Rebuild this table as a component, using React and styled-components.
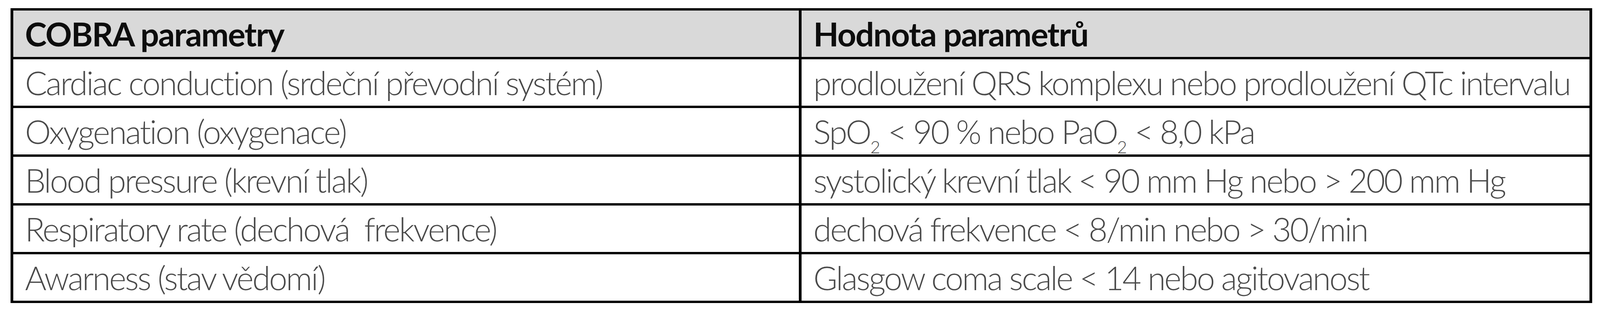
import React from "react";
import styled, { createGlobalStyle } from "styled-components";

const Global = createGlobalStyle`
  html, body {
    margin: 0;
    padding: 0;
    background: #ffffff;
  }
  body {
    font-family: "Lato", "Open Sans", "Liberation Sans", sans-serif;
  }
`;

const Page = styled.div`
  padding: 21px 20px 0 27px;
`;

const Table = styled.div`
  display: grid;
  grid-template-columns: 2660fr 2667fr;
  grid-auto-rows: 125px;
  box-sizing: border-box;
  border-top: 6px solid #000;
  border-left: 7px solid #000;
`;

const Cell = styled.div`
  box-sizing: border-box;
  min-width: 0;
  display: flex;
  align-items: center;
  padding: 0 0 0 30px;
  border-right: 7px solid #000;
  border-bottom: 6px solid #000;
  background: ${(p) => (p.$head ? "#d9d9d9" : "#ffffff")};
  color: ${(p) => (p.$head ? "#0d0d0d" : "#4a4a4a")};
  font-size: 84px;
  font-weight: ${(p) => (p.$head ? 700 : 300)};
  letter-spacing: ${(p) => (p.$head ? "-2px" : "-3.5px")};
  line-height: 1;
`;

const Label = styled.span`
  display: block;
  white-space: pre;
`;

const Sub = styled.span`
  font-size: 44px;
  vertical-align: -24px;
  line-height: 0;
  letter-spacing: 0;
`;

const rows = [
  ["Cardiac conduction (srdeční převodní systém)", "prodloužení QRS komplexu nebo prodloužení QTc intervalu"],
  [
    "Oxygenation (oxygenace)",
    <>
      SpO<Sub>2</Sub> &lt; 90 % nebo PaO<Sub>2</Sub> &lt; 8,0 kPa
    </>,
  ],
  ["Blood pressure (krevní tlak)", "systolický krevní tlak < 90 mm Hg nebo > 200 mm Hg"],
  ["Respiratory rate (dechová  frekvence)", "dechová frekvence < 8/min nebo > 30/min"],
  ["Awarness (stav vědomí)", "Glasgow coma scale < 14 nebo agitovanost"],
];

export default function App() {
  return (
    <Page>
      <Global />
      <Table>
        <Cell $head>
          <Label>COBRA parametry</Label>
        </Cell>
        <Cell $head>
          <Label>Hodnota parametrů</Label>
        </Cell>
        {rows.map(([a, b], i) => (
          <React.Fragment key={i}>
            <Cell>
              <Label>{a}</Label>
            </Cell>
            <Cell>
              <Label>{b}</Label>
            </Cell>
          </React.Fragment>
        ))}
      </Table>
    </Page>
  );
}
